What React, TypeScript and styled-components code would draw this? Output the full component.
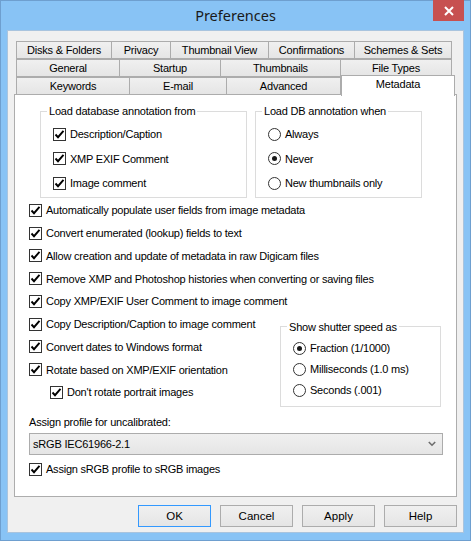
import React from "react";
import styled, { createGlobalStyle } from "styled-components";

const GlobalStyle = createGlobalStyle`
  html, body {
    margin: 0;
    padding: 0;
    background: #ffffff;
  }
  body {
    font-family: "Liberation Sans", Arial, sans-serif;
    font-size: 11px;
    color: #000;
  }
`;

const Window = styled.div`
  width: 471px;
  height: 541px;
  box-sizing: border-box;
  background: #88c3f5;
  border: 1px solid #6e9fcf;
  display: flex;
  flex-direction: column;
`;

const TitleBar = styled.div`
  height: 29px;
  display: flex;
  align-items: flex-start;
  justify-content: center;
  position: relative;
`;

const Title = styled.div`
  font-family: "Noto Sans", "Open Sans", sans-serif;
  font-size: 14.5px;
  line-height: 29px;
  color: #1a1a1a;
`;

const CloseButton = styled.div`
  position: absolute;
  top: -1px;
  right: 6px;
  width: 31px;
  height: 21px;
  background: #c75050;
  display: flex;
  align-items: center;
  justify-content: center;
`;

const Client = styled.div`
  flex: 1;
  margin: 0 6px 7px 6px;
  background: #f0f0f0;
  border: 1px solid #a9c4de;
  display: flex;
  flex-direction: column;
  padding: 10px 6px 0 6px;
`;

const TabStack = styled.div`
  display: flex;
  flex-direction: column;
  padding-left: 2px;
  position: relative;
  z-index: 1;
`;

const TabRow = styled.div`
  display: flex;
  height: 18px;
`;

const Tab = styled.div<{ $w: number; $active?: boolean }>`
  width: ${(p) => p.$w}px;
  box-sizing: border-box;
  height: ${(p) => (p.$active ? 21 : 18)}px;
  margin-top: ${(p) => (p.$active ? -2 : 0)}px;
  border: 1px solid #acacac;
  border-left-width: ${(p) => (p.$active ? 1 : 0)}px;
  border-bottom: ${(p) => (p.$active ? "none" : "1px solid #acacac")};
  &:first-child {
    border-left-width: 1px;
  }
  background: ${(p) =>
    p.$active ? "#ffffff" : "linear-gradient(#f0f0f0, #e5e5e5)"};
  display: flex;
  align-items: ${(p) => (p.$active ? "flex-start" : "center")};
  justify-content: center;
  padding-top: ${(p) => (p.$active ? 2 : 0)}px;
  letter-spacing: -0.2px;
  white-space: nowrap;
  color: #000;
`;

const Panel = styled.div`
  height: 403px;
  box-sizing: border-box;
  background: #ffffff;
  border: 1px solid #adadad;
  margin-top: -1px;
  padding: 10px 0 0 14px;
  display: flex;
  flex-direction: column;
`;

const GroupRow = styled.div`
  display: flex;
  gap: 8px;
  margin-left: 11px;
`;

const Group = styled.fieldset<{ $w: number; $h: number }>`
  width: ${(p) => p.$w}px;
  height: ${(p) => p.$h}px;
  box-sizing: border-box;
  margin: 0;
  border: 1px solid #dcdcdc;
  border-radius: 0;
  padding: 5px 0 0 12px;
  display: flex;
  flex-direction: column;
`;

const Legend = styled.legend`
  padding: 0 2px;
  margin-left: -6px;
  letter-spacing: -0.2px;
  line-height: 12px;
`;

const Row = styled.div<{ $indent?: number; $h?: number }>`
  height: ${(p) => p.$h || 22.75}px;
  display: flex;
  align-items: center;
  gap: 4px;
  padding-left: ${(p) => p.$indent || 0}px;
  letter-spacing: -0.22px;
  white-space: nowrap;
`;

const Box = styled.span`
  width: 13px;
  height: 13px;
  box-sizing: border-box;
  border: 1px solid #333333;
  background: #ffffff;
  display: flex;
  align-items: center;
  justify-content: center;
  flex-shrink: 0;
`;

const Round = styled.span`
  width: 13px;
  height: 13px;
  box-sizing: border-box;
  border: 1px solid #333333;
  border-radius: 50%;
  background: #ffffff;
  display: flex;
  align-items: center;
  justify-content: center;
  flex-shrink: 0;
`;

const Dot = styled.span`
  width: 5px;
  height: 5px;
  border-radius: 50%;
  background: #1a1a1a;
`;

const ChecksTop = styled.div`
  display: flex;
  flex-direction: column;
  margin-top: 1px;
`;

const SplitArea = styled.div`
  display: flex;
`;

const LeftColumn = styled.div`
  display: flex;
  flex-direction: column;
  width: 251px;
`;

const ShutterGroup = styled(Group)`
  margin-top: 8px;
  padding-top: 5px;
`;

const FieldLabel = styled.div`
  margin-top: 8px;
  height: 14px;
  line-height: 14px;
  letter-spacing: -0.2px;
`;

const Select = styled.div`
  margin-top: 4px;
  width: 414px;
  height: 22px;
  box-sizing: border-box;
  border: 1px solid #acacac;
  background: linear-gradient(#f0f0f0, #e5e5e5);
  display: flex;
  align-items: center;
  justify-content: space-between;
  padding: 0 6px 0 3px;
  letter-spacing: -0.2px;
`;

const LastRow = styled(Row)`
  margin-top: 3px;
`;

const ButtonBar = styled.div`
  display: flex;
  justify-content: flex-end;
  gap: 9px;
  margin-top: 8px;
`;

const Button = styled.div<{ $default?: boolean }>`
  width: 73px;
  height: 22px;
  box-sizing: border-box;
  border: 1px solid ${(p) => (p.$default ? "#3399ff" : "#acacac")};
  background: linear-gradient(#f0f0f0, #e5e5e5);
  display: flex;
  align-items: center;
  justify-content: center;
  font-size: 11.5px;
`;

const Tick = () => (
  <svg width="11" height="11" viewBox="0 0 11 11">
    <path
      d="M1.5 5.5 L4 8.2 L9.5 1.8"
      fill="none"
      stroke="#000"
      strokeWidth="1.9"
    />
  </svg>
);

type ItemProps = { label: string; indent?: number; h?: number };

const Check = ({ label, indent, h }: ItemProps) => (
  <Row $indent={indent} $h={h}>
    <Box>
      <Tick />
    </Box>
    <span>{label}</span>
  </Row>
);

const Radio = ({ label, on, h }: ItemProps & { on?: boolean }) => (
  <Row $h={h}>
    <Round>{on && <Dot />}</Round>
    <span>{label}</span>
  </Row>
);

const tabRows: { label: string; w: number; active?: boolean }[][] = [
  [
    { label: "Disks & Folders", w: 96 },
    { label: "Privacy", w: 59 },
    { label: "Thumbnail View", w: 98 },
    { label: "Confirmations", w: 86 },
    { label: "Schemes & Sets", w: 97 },
  ],
  [
    { label: "General", w: 104 },
    { label: "Startup", w: 101 },
    { label: "Thumbnails", w: 120 },
    { label: "File Types", w: 111 },
  ],
  [
    { label: "Keywords", w: 114 },
    { label: "E-mail", w: 97 },
    { label: "Advanced", w: 114 },
    { label: "Metadata", w: 114, active: true },
  ],
];

export default function App() {
  return (
    <>
      <GlobalStyle />
      <Window>
        <TitleBar>
          <Title>Preferences</Title>
          <CloseButton>
            <svg width="10" height="10" viewBox="0 0 10 10">
              <path
                d="M1 1 L9 9 M9 1 L1 9"
                stroke="#fff"
                strokeWidth="2"
                fill="none"
              />
            </svg>
          </CloseButton>
        </TitleBar>
        <Client>
          <TabStack>
            {tabRows.map((row, i) => (
              <TabRow key={i}>
                {row.map((t) => (
                  <Tab key={t.label} $w={t.w} $active={t.active}>
                    {t.label}
                  </Tab>
                ))}
              </TabRow>
            ))}
          </TabStack>
          <Panel>
            <GroupRow>
              <Group $w={207} $h={93}>
                <Legend>Load database annotation from</Legend>
                <Check label="Description/Caption" h={24.5} />
                <Check label="XMP EXIF Comment" h={24.5} />
                <Check label="Image comment" h={24.5} />
              </Group>
              <Group $w={167} $h={93}>
                <Legend>Load DB annotation when</Legend>
                <Radio label="Always" h={24.5} />
                <Radio label="Never" on h={24.5} />
                <Radio label="New thumbnails only" h={24.5} />
              </Group>
            </GroupRow>
            <ChecksTop>
              <Check label="Automatically populate user fields from image metadata" />
              <Check label="Convert enumerated (lookup) fields to text" />
              <Check label="Allow creation and update of metadata in raw Digicam files" />
              <Check label="Remove XMP and Photoshop histories when converting or saving files" />
              <Check label="Copy XMP/EXIF User Comment to image comment" />
              <SplitArea>
                <LeftColumn>
                  <Check label="Copy Description/Caption to image comment" />
                  <Check label="Convert dates to Windows format" />
                  <Check label="Rotate based on XMP/EXIF orientation" />
                  <Check label="Don't rotate portrait images" indent={21} />
                </LeftColumn>
                <ShutterGroup $w={161} $h={86}>
                  <Legend>Show shutter speed as</Legend>
                  <Radio label="Fraction (1/1000)" on h={21} />
                  <Radio label="Milliseconds (1.0 ms)" h={21} />
                  <Radio label="Seconds (.001)" h={21} />
                </ShutterGroup>
              </SplitArea>
            </ChecksTop>
            <FieldLabel>Assign profile for uncalibrated:</FieldLabel>
            <Select>
              <span>sRGB IEC61966-2.1</span>
              <svg width="8" height="6" viewBox="0 0 8 6">
                <path
                  d="M0.8 1 L4 4.2 L7.2 1"
                  stroke="#6d6d6d"
                  strokeWidth="1.6"
                  fill="none"
                />
              </svg>
            </Select>
            <LastRow>
              <Box>
                <Tick />
              </Box>
              <span>Assign sRGB profile to sRGB images</span>
            </LastRow>
          </Panel>
          <ButtonBar>
            <Button $default>OK</Button>
            <Button>Cancel</Button>
            <Button>Apply</Button>
            <Button>Help</Button>
          </ButtonBar>
        </Client>
      </Window>
    </>
  );
}
